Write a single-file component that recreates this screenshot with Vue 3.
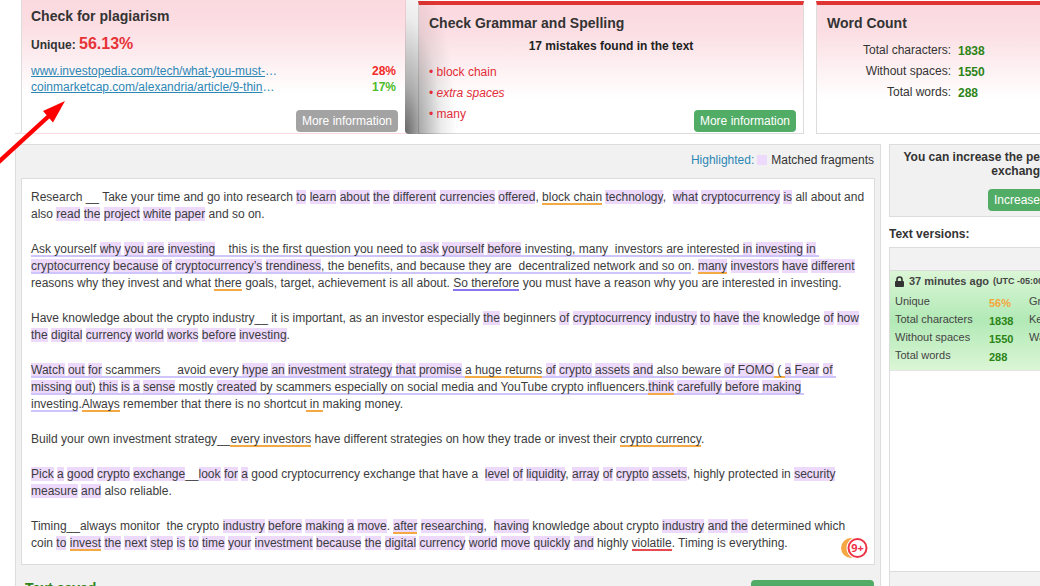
<script setup>
const sources = [
  { url: 'www.investopedia.com/tech/what-you-must-', share: '28%', tone: 'bad' },
  { url: 'coinmarketcap.com/alexandria/article/9-thin', share: '17%', tone: 'good' },
]

const mistakes = [
  { text: 'block chain' },
  { text: 'extra spaces', slanted: true },
  { text: 'many' },
]

const counts = [
  { label: 'Total characters:', value: 1838 },
  { label: 'Without spaces:', value: 1550 },
  { label: 'Total words:', value: 288 },
]

const versionRows = [
  { label: 'Unique', value: '56%', tone: 'warn', extra: 'Gr' },
  { label: 'Total characters', value: '1838', extra: 'Ke' },
  { label: 'Without spaces', value: '1550', extra: 'Wa' },
  { label: 'Total words', value: '288', extra: '' },
]

// Each run is [underline, text]; words inside braces are matched fragments.
const paragraphs = [
  [
    ['', 'Research __ Take your time and go into research {to learn about the different currencies offered}, '],
    ['orange', 'block chain'],
    ['', ' {technology},  {what cryptocurrency is} all about and also {read the project white paper} and so on.'],
  ],
  [
    ['lilac', 'Ask yourself {why you are investing}'],
    ['lilac blank', '__'],
    ['lilac', 'this is the first question you need to {ask yourself before} investing, many  investors are interested {in investing in} {cryptocurrency because of cryptocurrency’s trendiness}, the benefits, and because they are  decentralized network and so on'],
    ['', '. '],
    ['orange', '{many}'],
    ['', ' {investors have different} reasons why they invest and what '],
    ['orange', 'there'],
    ['', ' goals, target, achievement is all about. '],
    ['violet', 'So therefore'],
    ['', ' you must have a reason why you are interested in investing.'],
  ],
  [
    ['', 'Have knowledge about the crypto industry__ it is important, as an investor especially {the} beginners {of cryptocurrency industry to have the} knowledge {of how the digital currency world works before investing}.'],
  ],
  [
    ['lilac', '{Watch out for} scammers'],
    ['lilac blank', '__'],
    ['lilac', ' avoid every {hype an investment strategy that promise} '],
    ['orange', 'a huge returns'],
    ['lilac', ' {of crypto assets and} also beware {of FOMO}'],
    ['orange', ' ( '],
    ['lilac', '{a Fear of} {missing out}) {this is a sense} mostly {created} by scammers especially on social media and YouTube crypto influencers.'],
    ['orange', '{think}'],
    ['lilac', ' {carefully before making} investing'],
    ['', '.'],
    ['orange', 'Always'],
    ['', ' remember that there is no shortcut'],
    ['orange', ' in '],
    ['', 'making money.'],
  ],
  [
    ['', 'Build your own investment strategy__'],
    ['orange', 'every investors'],
    ['', ' have different strategies on how they trade or invest their '],
    ['orange', 'crypto currency'],
    ['', '.'],
  ],
  [
    ['', '{Pick a good crypto exchange}__{look for a} good cryptocurrency exchange that have a  {level of liquidity}, {array of crypto assets}, highly protected in {security measure and} also reliable.'],
  ],
  [
    ['', 'Timing__always monitor  the crypto {industry before making a move}. '],
    ['orange', '{after}'],
    ['', ' {researching},  {having} knowledge about crypto {industry and the} determined which coin {to} '],
    ['orange', '{invest}'],
    ['', ' {the next step is to time your investment because the digital currency world move quickly and} highly '],
    ['red', 'violatile'],
    ['', '. Timing is everything.'],
  ],
]

function pieces(text) {
  const out = []
  text.split(/(\{[^}]*\})/).forEach((part) => {
    if (!part) return
    if (part[0] !== '{') {
      out.push({ text: part, hit: false })
      return
    }
    part.slice(1, -1).split(/( )/).forEach((word) => {
      if (word) out.push({ text: word, hit: word !== ' ' })
    })
  })
  return out
}

const article = paragraphs.map((runs) =>
  runs.map(([line, text]) => ({ line, pieces: pieces(text) })),
)
</script>

<template>
  <div class="page">
    <div class="edge"></div>
    <section class="cards">
      <article class="card plagiarism">
        <h2>Check for plagiarism</h2>
        <p class="unique">Unique: <strong>56.13%</strong></p>
        <ul class="sources">
          <li v-for="s in sources" :key="s.url">
            <span class="source"><a href="#">{{ s.url }}</a>…</span>
            <b :class="s.tone">{{ s.share }}</b>
          </li>
        </ul>
        <button type="button" class="btn muted">More information</button>
      </article>

      <article class="card bar shaded">
        <h2>Check Grammar and Spelling</h2>
        <p class="found">17 mistakes found in the text</p>
        <ul class="mistakes">
          <li v-for="m in mistakes" :key="m.text">• <span :class="{ slanted: m.slanted }">{{ m.text }}</span></li>
        </ul>
        <button type="button" class="btn">More information</button>
      </article>

      <article class="card bar last">
        <h2>Word Count</h2>
        <table class="counts">
          <tbody>
            <tr v-for="c in counts" :key="c.label">
              <th scope="row">{{ c.label }}</th>
              <td>{{ c.value }}</td>
            </tr>
          </tbody>
        </table>
      </article>
    </section>

    <svg class="arrow" width="70" height="70" viewBox="0 0 70 70" aria-hidden="true">
      <path d="M-3 65.5 L50 17" stroke="#fe0000" stroke-width="4.4" fill="none" />
      <path d="M65 3 L43 13 L53 24.500 Z" fill="#fe0000" />
    </svg>

    <div class="body">
      <main class="panel">
        <p class="legend"><a href="#">Highlighted:</a><i class="swatch"></i>Matched fragments</p>
        <div class="sheet">
          <p v-for="(runs, i) in article" :key="i"><span v-for="(run, j) in runs" :key="j" :class="run.line ? ['run', run.line] : null"><template v-for="(p, k) in run.pieces" :key="k"><mark v-if="p.hit">{{ p.text }}</mark><template v-else>{{ p.text }}</template></template></span></p>
          <svg class="badge" width="28" height="22" viewBox="0 0 28 22" role="img" aria-label="Errors">
            <circle cx="11" cy="11" r="10" fill="#f4a742" />
            <circle cx="17.500" cy="11" r="11" fill="#fff" />
            <circle cx="17.500" cy="11" r="9" fill="#fff" stroke="#ee3347" stroke-width="2" />
            <text x="17.500" y="15" text-anchor="middle">9+</text>
          </svg>
        </div>
        <footer class="foot">
          <h3>Text saved</h3>
          <button type="button" class="btn check" aria-label="Check text"></button>
        </footer>
      </main>

      <aside class="side">
        <div class="promo">
          <p>You can increase the pe<br />exchang</p>
          <button type="button" class="btn">Increase</button>
        </div>
        <h3>Text versions:</h3>
        <div class="versions">
          <div class="strip"></div>
          <div class="version">
            <p class="when">
              <svg width="9" height="11" viewBox="0 0 9 11" aria-hidden="true">
                <path d="M2 5.500 V3.500 a2.500 2.500 0 0 1 5 0 V5.500" fill="none" stroke="#333" stroke-width="1.600" />
                <rect x="0" y="5" width="9" height="6" rx="1" fill="#333" />
              </svg>
              <b>37 minutes ago</b><small>(UTC -05:00</small>
            </p>
            <table>
              <tbody>
                <tr v-for="r in versionRows" :key="r.label">
                  <th scope="row">{{ r.label }}</th>
                  <td :class="['num', r.tone]">{{ r.value }}</td>
                  <td>{{ r.extra }}</td>
                </tr>
              </tbody>
            </table>
          </div>
          <div class="strip end"></div>
        </div>
      </aside>
    </div>
  </div>
</template>

<style>
body {
  margin: 0;
  background: #fff;
}
</style>

<style scoped>
.page {
  position: relative;
  display: flex;
  flex-direction: column;
  height: 100vh;
  overflow: hidden;
  box-sizing: border-box;
  font: 12px/16px "Liberation Sans", Arial, sans-serif;
  color: #333;
}
h2, h3, p, ul, li {
  margin: 0;
  padding: 0;
  list-style: none;
}
a {
  color: #2c87b5;
}
.cards {
  display: grid;
  grid-template-columns: 385fr 386fr 224fr;
  gap: 12px;
  height: 134px;
  padding-left: 21px;
}
.edge {
  position: absolute;
  z-index: 1;
  left: 15px;
  top: 0;
  width: 6px;
  height: 133px;
  border-right: 1px solid #dcdcdc;
  border-bottom: 1px solid #dcdcdc;
  border-bottom-right-radius: 4px;
}
.card {
  position: relative;
  box-sizing: border-box;
  min-width: 0;
  border: 1px solid #dcdcdc;
  border-top: 0;
  padding: 14px 8px 0 10px;
  background: linear-gradient(#fbd9df, #fbdee3 26px, #fff 94px);
}
.card h2 {
  font-size: 14px;
  line-height: 16px;
}
.card .btn {
  position: absolute;
  right: 7px;
  bottom: 1px;
}
.plagiarism {
  border-color: transparent;
  padding: 8px 9px 0 9px;
}
.bar {
  margin-top: 1px;
  border-top: 4px solid #df3431;
  padding: 10px 10px 0 10px;
}
.bar.last {
  border-right: 0;
}
.shaded::before {
  content: "";
  position: absolute;
  left: -14px;
  top: -5px;
  bottom: -1px;
  width: 54px;
  border-bottom-left-radius: 4px;
  background: radial-gradient(ellipse 52px 165px at 0 100%, rgba(0, 0, 0, 0.6), rgba(0, 0, 0, 0.32) 30%, rgba(0, 0, 0, 0.08) 70%, transparent);
}
.shaded > * {
  position: relative;
}
.unique {
  margin-top: 10px;
  line-height: 20px;
  font-weight: bold;
}
.unique strong {
  font-size: 16px;
  color: #e73236;
}
.sources {
  margin-top: 8px;
}
.sources li {
  display: flex;
  justify-content: space-between;
}
.source {
  color: #2c87b5;
}
.bad {
  color: #f02c28;
}
.good {
  color: #4dbd2c;
}
.btn {
  height: 22px;
  padding: 0 6px;
  border: 0;
  border-radius: 4px;
  background: #51ac66;
  color: #fff;
  font: inherit;
}
.btn.muted {
  background: #a3a3a3;
}
.found {
  margin-top: 7px;
  font-weight: bold;
  text-align: center;
  color: #222;
}
.mistakes {
  margin-top: 8px;
  line-height: 21px;
  color: #e12d38;
}
.slanted {
  font-style: italic;
}
.counts {
  margin-top: 9px;
  border-collapse: collapse;
}
.counts th {
  width: 124px;
  padding: 0;
  font-weight: normal;
  text-align: right;
  line-height: 21px;
}
.counts td {
  padding: 1px 0 0 7px;
  line-height: 20px;
  font-weight: bold;
  color: #2c8417;
}
.arrow {
  position: absolute;
  left: 0;
  top: 98px;
}
.body {
  display: grid;
  grid-template-columns: minmax(0, 1fr) 151px;
  grid-template-rows: minmax(0, 1fr);
  gap: 8px;
  flex: 1;
  min-height: 0;
  margin-top: 10px;
  padding-left: 15px;
}
.panel {
  box-sizing: border-box;
  border: 1px solid #dcdcdc;
  border-bottom: 0;
  background: #f1f1f1;
  padding: 7px 5px 0 5px;
}
.legend {
  display: flex;
  align-items: center;
  justify-content: flex-end;
  padding-right: 1px;
}
.legend a {
  text-decoration: none;
}
.swatch {
  width: 10px;
  height: 10px;
  margin: 0 4px 0 3px;
  background: #ecd9fc;
}
.sheet {
  position: relative;
  margin-top: 10px;
  border: 1px solid #dcdcdc;
  background: #fff;
  padding: 10px 7px 12px 9px;
  line-height: 17px;
  color: #3c3c3c;
}
.sheet p {
  white-space: pre-wrap;
}
.sheet p + p {
  margin-top: 18px;
}
mark {
  color: inherit;
  background-color: #ecd9fc;
}
.run,
.run mark {
  padding-bottom: 1px;
  background-image: linear-gradient(var(--line), var(--line));
  background-repeat: no-repeat;
  background-position: 0 100%;
  background-size: 100% 2px;
}
.orange {
  --line: #f3aa44;
}
.lilac {
  --line: #cfc5fa;
}
.violet {
  --line: #8875ef;
}
.red {
  --line: #e64b54;
}
.blank {
  color: var(--line);
}
.badge {
  position: absolute;
  right: 6px;
  bottom: 5px;
}
.badge text {
  font: bold 11px "Open Sans", "Liberation Sans", sans-serif;
  fill: #ee3347;
}
.foot {
  display: flex;
  justify-content: space-between;
  align-items: flex-start;
  margin-top: 15px;
  padding: 0 1px 0 4px;
}
.foot h3 {
  font-size: 14px;
  line-height: 16px;
  color: #2c8417;
}
.check {
  width: 123px;
}
.side {
  display: flex;
  flex-direction: column;
  min-width: 0;
  overflow: hidden;
}
.promo {
  border: 1px solid #dcdcdc;
  border-right: 0;
  background: #f1f1f1;
  padding: 5px 0;
  text-align: right;
  white-space: nowrap;
}
.promo p {
  font-weight: bold;
  line-height: 14px;
}
.promo .btn {
  margin-top: 11px;
  padding-right: 0;
  border-radius: 4px 0 0 4px;
}
.side h3 {
  margin: 9px 0 5px;
  font-size: 12px;
  line-height: 16px;
}
.versions {
  display: flex;
  flex-direction: column;
  flex: 1;
  border-left: 1px solid #dcdcdc;
  border-top: 1px solid #dcdcdc;
}
.strip {
  height: 22px;
  background: #f2f2f2;
  border-bottom: 1px solid #dcdcdc;
}
.strip.end {
  height: 14px;
  margin-top: auto;
  border-top: 1px solid #dcdcdc;
  border-bottom: 0;
}
.version {
  padding: 3px 0 6px 5px;
  border-bottom: 1px solid #e4e4e4;
  background: linear-gradient(#dbf6d6, #b2e9b6 50%, #dbf6d6);
  font-size: 11px;
  white-space: nowrap;
  color: #444;
}
.when {
  display: flex;
  align-items: center;
  line-height: 15px;
}
.when svg {
  flex: none;
}
.when b {
  margin: 0 4px 0 5px;
}
.when small {
  font-size: 9px;
  font-weight: bold;
}
.version table {
  border-collapse: collapse;
  margin-top: 3px;
}
.version th,
.version td {
  padding: 0;
  height: 18px;
  line-height: 18px;
  font-weight: normal;
  text-align: left;
}
.version th {
  min-width: 94px;
}
.version .num {
  min-width: 40px;
  line-height: 13px;
  vertical-align: bottom;
  font-weight: bold;
  color: #2c8417;
}
.version .warn {
  color: #f5a63a;
}
</style>
